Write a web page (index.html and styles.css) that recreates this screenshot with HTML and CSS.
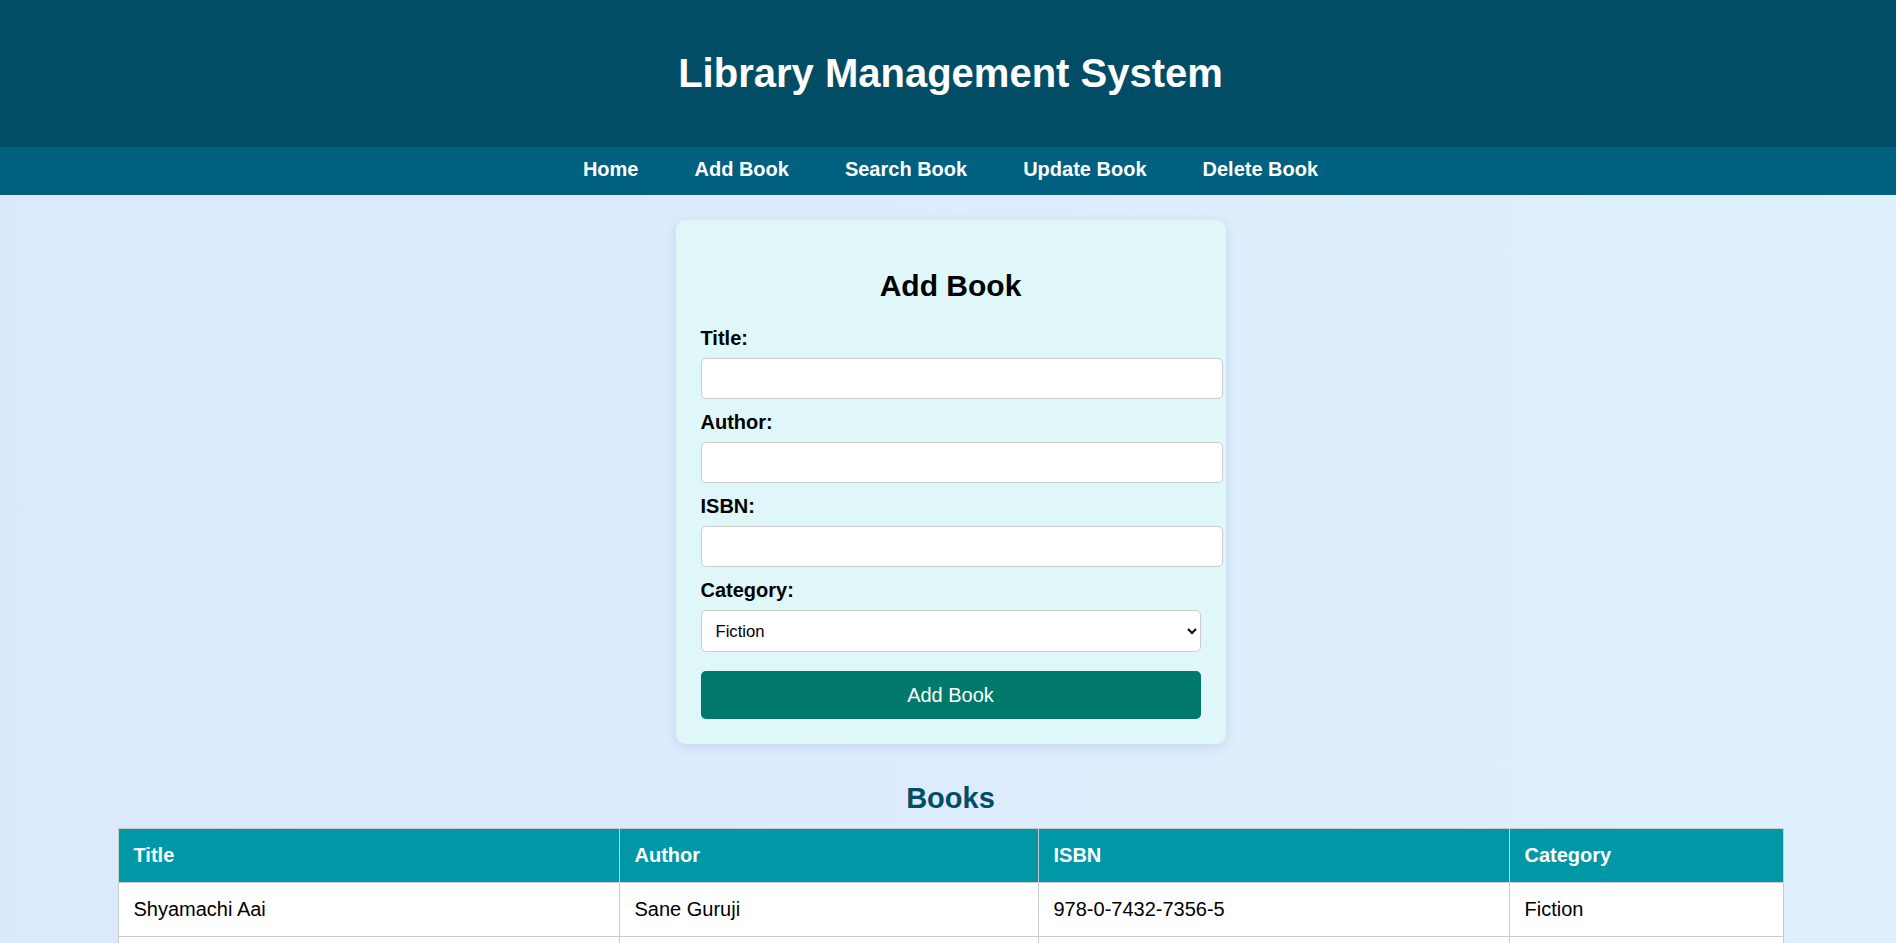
FILE: index.html
```html
<!DOCTYPE html>
<html lang="en">
<head>
<meta charset="utf-8">
<title>Library Management System</title>
<link rel="stylesheet" href="styles.css">
</head>
<body>
<header class="site-header">
  <h1 class="site-title">Library Management System</h1>
</header>
<nav class="site-nav">
  <a href="#" class="nav-link">Home</a>
  <a href="#" class="nav-link">Add Book</a>
  <a href="#" class="nav-link">Search Book</a>
  <a href="#" class="nav-link">Update Book</a>
  <a href="#" class="nav-link">Delete Book</a>
</nav>
<main class="content">
  <section class="card">
    <h2 class="card-title">Add Book</h2>
    <form class="book-form">
      <label class="field-label" for="title">Title:</label>
      <input class="field-input" type="text" id="title">
      <label class="field-label" for="author">Author:</label>
      <input class="field-input" type="text" id="author">
      <label class="field-label" for="isbn">ISBN:</label>
      <input class="field-input" type="text" id="isbn">
      <label class="field-label" for="category">Category:</label>
      <select class="field-select" id="category">
        <option>Fiction</option>
        <option>Non-Fiction</option>
        <option>Science</option>
        <option>History</option>
      </select>
      <button class="submit-btn" type="button">Add Book</button>
    </form>
  </section>
  <h2 class="section-title">Books</h2>
  <table class="books-table">
    <colgroup>
      <col class="col-title">
      <col class="col-author">
      <col class="col-isbn">
      <col class="col-category">
    </colgroup>
    <thead>
      <tr><th>Title</th><th>Author</th><th>ISBN</th><th>Category</th></tr>
    </thead>
    <tbody>
      <tr><td>Shyamachi Aai</td><td>Sane Guruji</td><td>978-0-7432-7356-5</td><td>Fiction</td></tr>
      <tr class="empty-row"><td></td><td></td><td></td><td></td></tr>
    </tbody>
  </table>
</main>
</body>
</html>
```
FILE: styles.css
```css
* { box-sizing: content-box; }
html, body { margin: 0; padding: 0; }
body {
  font-family: "Liberation Sans", Arial, sans-serif;
  font-size: 20px;
  color: #000;
  background: linear-gradient(to right, #dbe9fc, #dff0fd);
  min-height: 943px;
  overflow: hidden;
}
.site-header {
  background: #014d66;
  padding: 50px 0 51px 5px;
}
.site-title {
  margin: 0;
  text-align: center;
  color: #fff;
  font-size: 40px;
  line-height: 46px;
  font-weight: bold;
}
.site-nav {
  background: #006080;
  display: flex;
  justify-content: center;
  padding: 11px 0 14px 5px;
}
.nav-link {
  color: #fff;
  text-decoration: none;
  font-weight: bold;
  font-size: 20px;
  line-height: 23px;
  margin: 0 28px;
}
.content {
  padding: 25px 0 0 5px;
}
.card {
  width: 500px;
  margin: 0 auto;
  padding: 25px;
  background: #e0f7fa;
  border-radius: 10px;
  box-shadow: 0 3px 12px rgba(30, 60, 120, 0.12);
}
.card-title {
  margin: 23px 0 24px;
  text-align: center;
  font-size: 30px;
  line-height: 35px;
  font-weight: bold;
}
.book-form {
  display: block;
}
.field-label {
  display: block;
  font-weight: bold;
  font-size: 20px;
  line-height: 23px;
  margin-bottom: 8px;
}
.field-input {
  display: block;
  width: 100%;
  padding: 10px;
  border: 1px solid #ccc;
  border-radius: 5px;
  font-family: "Liberation Sans", Arial, sans-serif;
  font-size: 16.67px;
  line-height: 19px;
  background: #fff;
  margin: 0 0 12px;
}
.field-select {
  display: block;
  box-sizing: border-box;
  width: 100%;
  height: 42px;
  padding: 0 10px;
  border: 1px solid #ccc;
  border-radius: 5px;
  font-family: "Liberation Sans", Arial, sans-serif;
  font-size: 16.67px;
  background: #fff;
  color: #000;
  margin: 0 0 19px;
}
.submit-btn {
  display: block;
  box-sizing: border-box;
  width: 100%;
  height: 48px;
  padding: 0;
  border: none;
  border-radius: 5px;
  background: #00796b;
  color: #fff;
  font-family: "Liberation Sans", Arial, sans-serif;
  font-size: 20px;
  line-height: 24px;
  cursor: pointer;
}
.section-title {
  margin: 38px 0 13px;
  text-align: center;
  color: #014d66;
  font-size: 29px;
  line-height: 33px;
  font-weight: bold;
}
.books-table {
  width: 1665px;
  margin: 0 auto;
  border-collapse: collapse;
  table-layout: fixed;
  background: #fff;
}
.col-title { width: 501px; }
.col-author { width: 419px; }
.col-isbn { width: 471px; }
.col-category { width: 274px; }
.books-table th,
.books-table td {
  border: 1px solid #ccc;
  padding: 15px;
  text-align: left;
  font-size: 20px;
  line-height: 23px;
}
.books-table th {
  background: #0097a7;
  color: #fff;
  font-weight: bold;
}
.books-table td {
  color: #000;
}
.empty-row td {
  height: 23px;
}
```
